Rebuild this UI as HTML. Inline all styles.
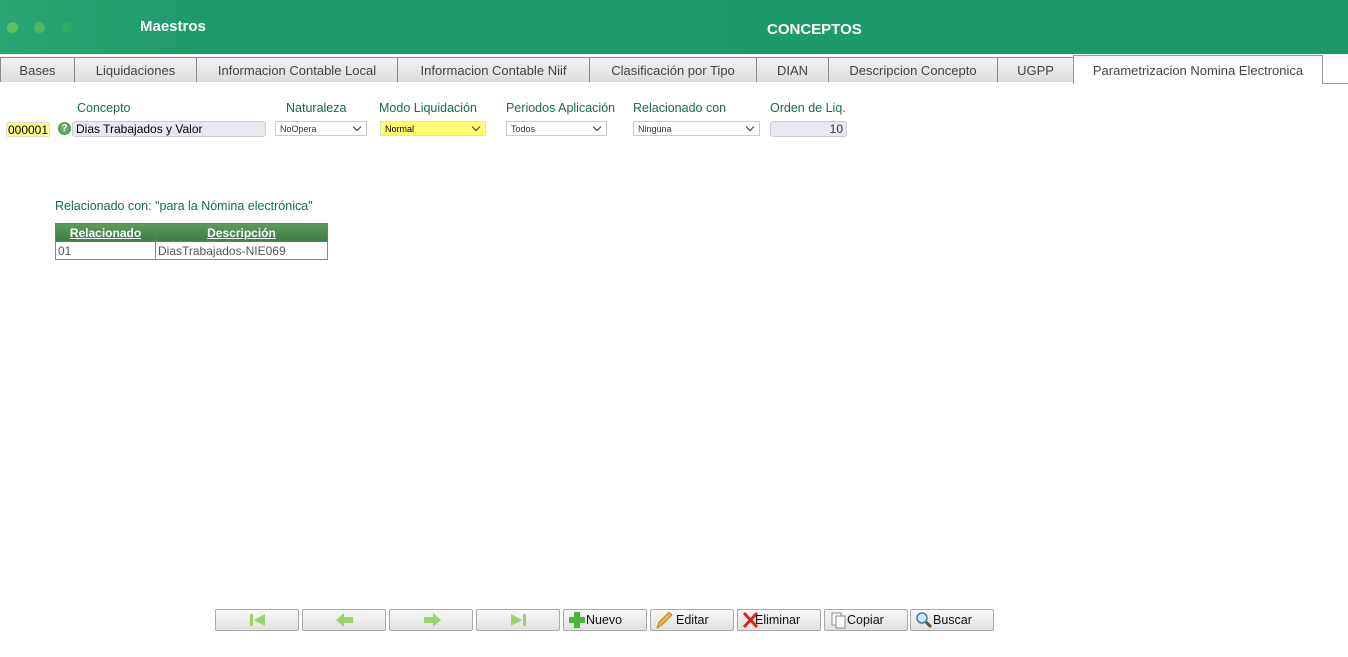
<!DOCTYPE html><html><head><meta charset="utf-8"><style>
body{margin:0;width:1348px;height:657px;background:#fff;font-family:"Liberation Sans",sans-serif;position:relative;overflow:hidden}
.hdr{position:absolute;left:0;top:0;width:1348px;height:54px;background:linear-gradient(90deg,#2aa574 0%,#1f9a6a 15%,#1e996a 100%)}
.dot{position:absolute;top:22px;width:11px;height:11px;border-radius:50%}
.a{position:absolute;white-space:nowrap}
.tab{position:absolute;top:57px;height:25px;background:linear-gradient(#f2f2f2,#dcdcdc);border:1px solid #8a8a8a;border-bottom:none;box-sizing:border-box;font-size:13px;color:#444;text-align:center;line-height:25px}
.lbl{position:absolute;top:101px;font-size:12.5px;color:#1c6a4a}
.sel{position:absolute;top:121px;height:15px;border:1px solid #ccc;font-size:9px;line-height:15px;padding-left:4px;box-sizing:border-box;color:#333}
.sel:after{content:"";position:absolute;right:6px;top:2px;width:5px;height:5px;border-right:1.5px solid #333;border-bottom:1.5px solid #333;transform:rotate(45deg)}
.btn{position:absolute;top:609px;width:84px;height:22px;border:1px solid #aaa;border-radius:2px;background:linear-gradient(#f8f8f8,#e0e0e0);box-sizing:border-box;font-size:12.5px;color:#111;line-height:20px}
</style></head><body>
<div class="hdr"></div>
<div class="dot" style="left:7px;background:#5cc060"></div>
<div class="dot" style="left:34px;background:#4fb860"></div>
<div class="dot" style="left:61px;background:#33a868"></div>
<div class="a" style="left:140px;top:18px;color:#fff;font-weight:bold;font-size:15px">Maestros</div>
<div class="a" style="left:767px;top:21px;color:#fff;font-weight:bold;font-size:15px">CONCEPTOS</div>
<div class="tab" style="left:0;width:75px">Bases</div>
<div class="tab" style="left:74px;width:123px">Liquidaciones</div>
<div class="tab" style="left:196px;width:202px">Informacion Contable Local</div>
<div class="tab" style="left:397px;width:193px">Informacion Contable Niif</div>
<div class="tab" style="left:589px;width:168px">Clasificación por Tipo</div>
<div class="tab" style="left:756px;width:73px">DIAN</div>
<div class="tab" style="left:828px;width:170px">Descripcion Concepto</div>
<div class="tab" style="left:997px;width:77px">UGPP</div>
<div class="tab" style="left:1073px;top:55px;height:29px;width:250px;background:#fff;border-color:#999;line-height:29px">Parametrizacion Nomina Electronica</div>
<div class="a" style="left:1322px;top:83px;width:26px;height:1px;background:#999"></div>
<div class="lbl" style="left:77px">Concepto</div>
<div class="lbl" style="left:286px">Naturaleza</div>
<div class="lbl" style="left:379px">Modo Liquidación</div>
<div class="lbl" style="left:506px">Periodos Aplicación</div>
<div class="lbl" style="left:633px">Relacionado con</div>
<div class="lbl" style="left:770px">Orden de Liq.</div>
<div class="a" style="left:6px;top:122px;width:44px;height:15px;background:#ffff80;border:1px solid #ddd;border-radius:2px;font-size:12px;line-height:15px;box-sizing:border-box;text-align:center">000001</div>
<div class="a" style="left:58px;top:122px;width:13px;height:13px;border-radius:50%;background:radial-gradient(#7cc27c,#3c8a3c);color:#fff;font-size:10px;font-weight:bold;text-align:center;line-height:13px">?</div>
<div class="a" style="left:72px;top:121px;width:194px;height:16px;background:#e8e8f0;border:1px solid #ccc;border-radius:3px;box-sizing:border-box;font-size:12px;line-height:15px;padding-left:3px">Dias Trabajados y Valor</div>
<div class="sel" style="left:275px;width:92px">NoOpera</div>
<div class="sel" style="left:380px;width:106px;background:#ffff70;border-color:#ddd;color:#000">Normal</div>
<div class="sel" style="left:506px;width:101px">Todos</div>
<div class="sel" style="left:633px;width:127px">Ninguna</div>
<div class="a" style="left:770px;top:121px;width:77px;height:16px;background:#e8e8f0;border:1px solid #ccc;border-radius:3px;box-sizing:border-box;font-size:12px;line-height:15px;text-align:right;padding-right:3px;color:#333">10</div>
<div class="a" style="left:55px;top:199px;font-size:12.5px;color:#1c6a4a">Relacionado con: "para la Nómina electrónica"</div>
<table style="position:absolute;left:55px;top:223px;width:273px;border-collapse:collapse;font-size:12px">
<tr style="background:linear-gradient(#5a9a5a,#3d7d45);height:18px"><th style="width:99px;border:1px solid #777;color:#fff;text-decoration:underline;padding:0">Relacionado</th><th style="border:1px solid #777;color:#fff;text-decoration:underline;padding:0">Descripción</th></tr>
<tr style="height:18px;color:#555"><td style="border:1px solid #888;padding:0 2px">01</td><td style="border:1px solid #888;padding:0 2px">DiasTrabajados-NIE069</td></tr></table>
<div class="btn" style="left:215px"><svg width="84" height="20"><rect x="34" y="4" width="3" height="12" fill="#9bd46b"/><path d="M49 4 L38 10 L49 16Z" fill="#9bd46b"/></svg></div>
<div class="btn" style="left:302px"><svg width="84" height="20"><path d="M33 10 L41 3 V7 H50 V13 H41 V17Z" fill="#9bd46b"/></svg></div>
<div class="btn" style="left:389px"><svg width="84" height="20"><path d="M51 10 L43 3 V7 H34 V13 H43 V17Z" fill="#9bd46b"/></svg></div>
<div class="btn" style="left:476px"><svg width="84" height="20"><path d="M34 4 L45 10 L34 16Z" fill="#9bd46b"/><rect x="46" y="4" width="3" height="12" fill="#9bd46b"/></svg></div>
<div class="btn" style="left:563px"><svg width="20" height="20" style="position:absolute;left:3px;top:0"><path d="M7 2h6v5h5v6h-5v5H7v-5H2V7h5z" fill="#4bb43a"/></svg><span style="position:absolute;left:22px">Nuevo</span></div>
<div class="btn" style="left:650px"><svg width="20" height="20" style="position:absolute;left:2px;top:0"><path d="M4 18 L6 12 L16 2 L19 5 L9 15Z" fill="#f0b030" stroke="#a06010" stroke-width=".6"/></svg><span style="position:absolute;left:25px">Editar</span></div>
<div class="btn" style="left:737px"><svg width="20" height="20" style="position:absolute;left:3px;top:0"><path d="M3 3 L16 17 M16 3 L3 17" stroke="#e02020" stroke-width="3"/></svg><span style="position:absolute;left:17px">Eliminar</span></div>
<div class="btn" style="left:824px"><svg width="20" height="20" style="position:absolute;left:4px;top:0"><rect x="3" y="3" width="9" height="12" fill="#fff" stroke="#888"/><rect x="7" y="6" width="9" height="12" fill="#fff" stroke="#888"/></svg><span style="position:absolute;left:22px">Copiar</span></div>
<div class="btn" style="left:910px"><svg width="20" height="20" style="position:absolute;left:3px;top:0"><circle cx="8" cy="8" r="5" fill="#cfe6f8" stroke="#4a7aa8" stroke-width="1.5"/><path d="M12 12 L17 17" stroke="#705030" stroke-width="3"/></svg><span style="position:absolute;left:22px">Buscar</span></div>
</body></html>
